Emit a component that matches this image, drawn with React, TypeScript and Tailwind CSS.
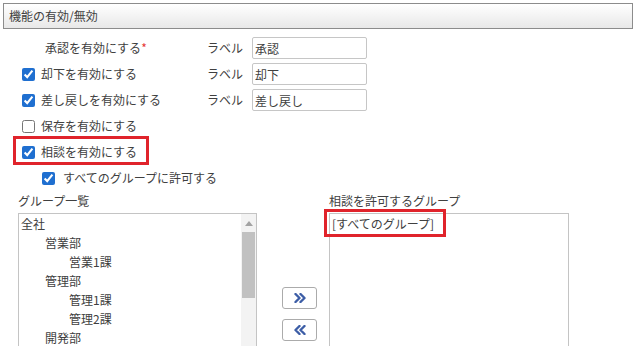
import React from "react";

const Check = ({ checked }: { checked: boolean }) => (
  <input
    type="checkbox"
    defaultChecked={checked}
    className="m-0 h-[13px] w-[13px] shrink-0 accent-[#1f6fd0]"
  />
);

const Chevrons = ({ dir }: { dir: "right" | "left" }) => (
  <svg width="12" height="10" viewBox="0 0 12 10" fill="none">
    {dir === "right" ? (
      <path d="M1.5 1 L5.5 5 L1.5 9 M6.5 1 L10.5 5 L6.5 9" stroke="#3c5da6" strokeWidth="2.4" strokeLinejoin="round" strokeLinecap="round" />
    ) : (
      <path d="M5.5 1 L1.5 5 L5.5 9 M10.5 1 L6.5 5 L10.5 9" stroke="#3c5da6" strokeWidth="2.4" strokeLinejoin="round" strokeLinecap="round" />
    )}
  </svg>
);

const LabelInput = ({ value }: { value: string }) => (
  <>
    <div className="w-[45px] shrink-0">ラベル</div>
    <input
      defaultValue={value}
      className="h-[22px] w-[115px] rounded-[2px] border border-[#c6c6c6] bg-white px-[2px] text-[12px] text-[#404040] outline-none"
    />
  </>
);

const groups: { name: string; level: number }[] = [
  { name: "全社", level: 0 },
  { name: "営業部", level: 1 },
  { name: "営業1課", level: 2 },
  { name: "管理部", level: 1 },
  { name: "管理1課", level: 2 },
  { name: "管理2課", level: 2 },
  { name: "開発部", level: 1 },
];

const indentClass = ["pl-[2px]", "pl-[26px]", "pl-[50px]"];

export default function App() {
  return (
    <div className="h-[346px] w-[634px] overflow-hidden bg-white text-[12px] text-[#404040] font-['Noto_Sans_CJK_JP','Meiryo',sans-serif]">
      <div className="ml-[3px] mt-[3px] flex h-[26px] w-[630px] items-center border border-[#8c8c8c] bg-linear-to-b from-white to-[#e8e8e8] pl-[5px]">
        機能の有効/無効
      </div>

      <div className="mt-[6px]">
        <div className="flex h-[26px] items-center">
          <div className="w-[207px] shrink-0 pl-[45px]">
            承認を有効にする<span className="text-[#e53935]">*</span>
          </div>
          <LabelInput value="承認" />
        </div>
        <div className="flex h-[26px] items-center">
          <div className="flex w-[207px] shrink-0 items-center pl-[22px]">
            <Check checked />
            <span className="ml-[6px]">却下を有効にする</span>
          </div>
          <LabelInput value="却下" />
        </div>
        <div className="flex h-[26px] items-center">
          <div className="flex w-[207px] shrink-0 items-center pl-[22px]">
            <Check checked />
            <span className="ml-[6px]">差し戻しを有効にする</span>
          </div>
          <LabelInput value="差し戻し" />
        </div>
        <div className="flex h-[26px] items-center pl-[22px]">
          <Check checked={false} />
          <span className="ml-[6px]">保存を有効にする</span>
        </div>
        <div className="relative flex h-[26px] items-center pl-[22px]">
          <Check checked />
          <span className="ml-[6px]">相談を有効にする</span>
          <div className="pointer-events-none absolute left-[13px] top-[-3px] h-[29px] w-[136px] border-[3px] border-[#e0232b]" />
        </div>
        <div className="flex h-[26px] items-center pl-[42px]">
          <Check checked />
          <span className="ml-[8px]">すべてのグループに許可する</span>
        </div>
      </div>

      <div className="flex">
        <div className="ml-[18px] w-[239px] shrink-0">
          <div className="flex h-[20px] items-center">グループ一覧</div>
          <div className="mt-[2px] flex h-[140px] border border-[#c4c4c4] bg-white">
            <div className="flex-1">
              {groups.map((g) => (
                <div key={g.name} className={`flex h-[19px] items-center ${indentClass[g.level]}`}>
                  {g.name}
                </div>
              ))}
            </div>
            <div className="flex w-[15px] shrink-0 flex-col items-center bg-[#f3f3f3]">
              <div className="flex h-[18px] w-full items-center justify-center">
                <svg width="8" height="5" viewBox="0 0 8 5">
                  <path d="M0 5 L4 0 L8 5 Z" fill="#a3a3a3" />
                </svg>
              </div>
              <div className="h-[66px] w-[13px] bg-[#c1c1c1]" />
            </div>
          </div>
        </div>

        <div className="w-[72px] shrink-0 pl-[25px] pt-[96px]">
          <button className="flex h-[22px] w-[35px] items-center justify-center rounded-[3px] border border-[#ababab] bg-white">
            <Chevrons dir="right" />
          </button>
          <button className="mt-[10px] flex h-[22px] w-[35px] items-center justify-center rounded-[3px] border border-[#ababab] bg-white">
            <Chevrons dir="left" />
          </button>
        </div>

        <div className="w-[240px] shrink-0">
          <div className="flex h-[20px] items-center">相談を許可するグループ</div>
          <div className="relative mt-[2px] h-[140px] border border-[#c4c4c4] bg-white">
            <div className="flex h-[19px] items-center pl-[2px]">[すべてのグループ]</div>
            <div className="pointer-events-none absolute left-[-6px] top-[-5px] h-[28px] w-[122px] border-[3px] border-[#e0232b]" />
          </div>
        </div>
      </div>
    </div>
  );
}
